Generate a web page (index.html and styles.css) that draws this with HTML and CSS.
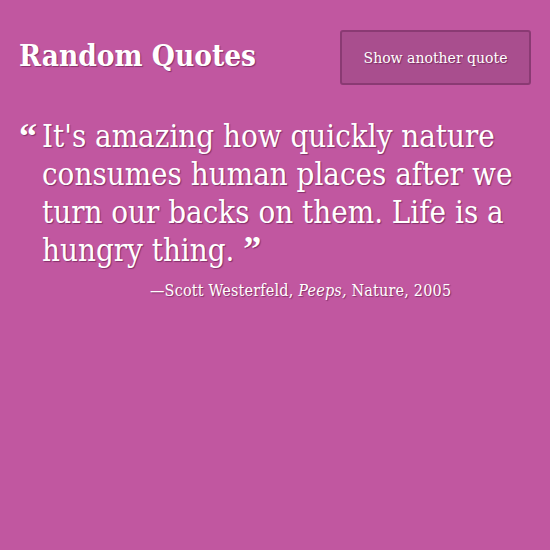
FILE: index.html
```html
<!DOCTYPE html>
<html lang="en">
<head>
<meta charset="utf-8">
<title>Random Quotes</title>
<link rel="stylesheet" href="styles.css">
</head>
<body>
<main class="app">
  <header class="top">
    <h1 class="title">Random Quotes</h1>
    <button class="btn" type="button">Show another quote</button>
  </header>
  <blockquote class="quote">
    <p class="quote-text"><span class="mark open">“</span>It's amazing how quickly nature consumes human places after we turn our backs on them. Life is a hungry thing. <span class="mark close">”</span></p>
    <footer class="cite">—Scott Westerfeld, <em>Peeps,</em> Nature, 2005</footer>
  </blockquote>
</main>
</body>
</html>
```
FILE: styles.css
```css
html, body {
  margin: 0;
  padding: 0;
  background: #c157a0;
}
body {
  font-family: "DejaVu Serif", "Liberation Serif", serif;
  font-stretch: condensed;
  color: #fff;
  text-shadow: 1px 1px 1px rgba(60, 0, 40, 0.45);
  width: 550px;
  height: 550px;
}
.app {
  padding: 30px 19px 0 19px;
}
.top {
  display: flex;
  justify-content: space-between;
  align-items: center;
}
.title {
  margin: 0;
  padding-bottom: 5px;
  font-size: 29.5px;
  font-weight: bold;
}
.btn {
  font-family: inherit;
  font-stretch: condensed;
  font-size: 15.6px;
  color: #fff;
  text-shadow: inherit;
  background: #a94e8e;
  border: 2px solid #8a3a73;
  border-radius: 3px;
  width: 191px;
  height: 55px;
  padding: 0;
}
.quote {
  margin: 32px 0 0 0;
  padding: 0 0 0 23px;
}
.quote-text {
  margin: 0;
  font-size: 31px;
  line-height: 38px;
  position: relative;
}
.mark {
  font-family: "Liberation Serif", serif;
  font-weight: bold;
  font-size: 36px;
  line-height: 0;
}
.open {
  position: absolute;
  left: -23px;
  top: 19px;
}
.cite {
  margin-top: 12px;
  padding-left: 108px;
  font-size: 16px;
  letter-spacing: 0.2px;
}
```
